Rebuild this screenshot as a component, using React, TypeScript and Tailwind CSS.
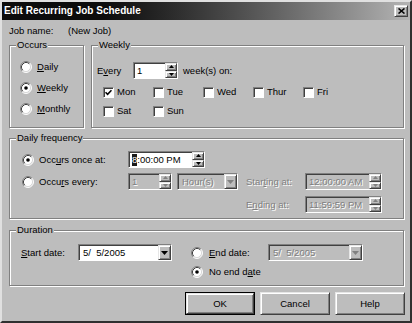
import type { ReactNode } from 'react'

const bg = 'bg-[#bdbdbd]'
const sunken =
  'border border-t-[#808080] border-l-[#808080] border-r-white border-b-white shadow-[inset_1px_1px_0_#404040]'
const raised =
  'border border-t-[#e6e6e6] border-l-[#e6e6e6] border-r-[#404040] border-b-[#404040] bg-[#bdbdbd] shadow-[inset_1px_1px_0_#fff,inset_-1px_-1px_0_#808080]'
const dim = 'text-[#808080] [text-shadow:1px_1px_0_#fff]'

function U({ children }: { children: ReactNode }) {
  return <span className="underline underline-offset-[1px]">{children}</span>
}

function Radio({ checked }: { checked?: boolean }) {
  return (
    <svg width="12" height="12" viewBox="0 0 12 12" className="shrink-0">
      <circle cx="6" cy="6" r="5" fill="white" />
      <path d="M9.89 2.11A5.5 5.5 0 0 0 2.11 9.89" stroke="#808080" fill="none" />
      <path d="M2.11 9.89A5.5 5.5 0 0 0 9.89 2.11" stroke="#fff" fill="none" />
      <path d="M9.18 2.82A4.5 4.5 0 0 0 2.82 9.18" stroke="#404040" fill="none" />
      <path d="M2.82 9.18A4.5 4.5 0 0 0 9.18 2.82" stroke="#d8d8d8" fill="none" />
      {checked && <circle cx="6" cy="6" r="1.8" fill="#000" />}
    </svg>
  )
}

function Check({ checked }: { checked?: boolean }) {
  return (
    <div className={`flex h-[11px] w-[11px] shrink-0 items-center justify-center bg-white ${sunken}`}>
      {checked && (
        <svg width="7" height="7" viewBox="0 0 7 7">
          <path d="M0.5 3.2 L2.6 5.3 L6.5 1.2" stroke="#000" strokeWidth="1.6" fill="none" />
        </svg>
      )}
    </div>
  )
}

function Arrow({ up, off }: { up?: boolean; off?: boolean }) {
  return (
    <svg width="5" height="3" viewBox="0 0 5 3">
      <path d={up ? 'M2.5 0L5 3H0Z' : 'M0 0H5L2.5 3Z'} fill={off ? '#808080' : '#000'} />
    </svg>
  )
}

function Spin({ w, children, off }: { w: string; children: ReactNode; off?: boolean }) {
  return (
    <div className={`flex h-[17px] ${w} ${sunken} ${off ? bg : 'bg-white'}`}>
      <div className={`flex flex-1 items-center pl-[3px] ${off ? dim : ''}`}>{children}</div>
      <div className="flex w-[12px] flex-col">
        <div className={`flex flex-1 items-center justify-center ${raised}`}>
          <Arrow up off={off} />
        </div>
        <div className={`flex flex-1 items-center justify-center ${raised}`}>
          <Arrow off={off} />
        </div>
      </div>
    </div>
  )
}

function Combo({ w, children, off }: { w: string; children: ReactNode; off?: boolean }) {
  return (
    <div className={`flex h-[17px] ${w} ${sunken} ${off ? bg : 'bg-white'}`}>
      <div className={`flex flex-1 items-center whitespace-pre pl-[4px] ${off ? dim : ''}`}>{children}</div>
      <div className={`flex w-[13px] items-center justify-center ${raised}`}>
        <svg width="7" height="4" viewBox="0 0 7 4">
          <path d="M0 0H7L3.5 4Z" fill={off ? '#808080' : '#000'} />
        </svg>
      </div>
    </div>
  )
}

function Group({ title, className, children }: { title: string; className: string; children: ReactNode }) {
  return (
    <fieldset
      className={`border border-[#808080] shadow-[1px_1px_0_#fff,inset_1px_1px_0_#fff] ${className}`}
    >
      <legend className={`ml-[6px] px-[1px] leading-[12px] ${bg}`}>{title}</legend>
      {children}
    </fieldset>
  )
}

function Day({ label, checked }: { label: string; checked?: boolean }) {
  return (
    <div className="flex w-[50px] items-center gap-[3px]">
      <Check checked={checked} />
      <span>{label}</span>
    </div>
  )
}

function Button({ label, isDefault }: { label: string; isDefault?: boolean }) {
  return (
    <div className={`h-[23px] w-[70px] ${isDefault ? 'border border-black' : ''}`}>
      <div className={`flex h-full w-full items-center justify-center ${raised}`}>{label}</div>
    </div>
  )
}

export default function App() {
  return (
    <div
      className={`h-[323px] w-[412px] border-2 border-t-[#e0e0e0] border-l-[#e0e0e0] border-r-[#303030] border-b-[#303030] font-['Liberation_Sans',Arial,sans-serif] text-[9.5px] leading-[12px] text-black ${bg}`}
    >
      <div className="flex h-[18px] items-center justify-between bg-gradient-to-r from-[#0c0c0c] from-25% to-[#b4b4b4] pl-[2px] pr-[2px]">
        <span className="text-[10px] font-bold text-white">Edit Recurring Job Schedule</span>
        <div className={`flex h-[12px] w-[14px] items-center justify-center ${raised}`}>
          <svg width="7" height="6" viewBox="0 0 7 6">
            <path d="M0.5 0.5L6.5 5.5M6.5 0.5L0.5 5.5" stroke="#000" strokeWidth="1.6" />
          </svg>
        </div>
      </div>

      <div className="pl-[7px] pt-[5px]">
        <div className="flex h-[12px] items-center">
          <span className="w-[59px]">Job name:</span>
          <span>(New Job)</span>
        </div>

        <div className="mt-[2px] flex gap-[7px]">
          <Group title="Occurs" className="h-[89px] w-[75px]">
            <div className="flex flex-col gap-[9px] pl-[10px] pt-[10px]">
              <div className="flex h-[12px] items-center gap-[5px]">
                <Radio />
                <span>
                  <U>D</U>aily
                </span>
              </div>
              <div className="flex h-[12px] items-center gap-[5px]">
                <Radio checked />
                <span>
                  <U>W</U>eekly
                </span>
              </div>
              <div className="flex h-[12px] items-center gap-[5px]">
                <Radio />
                <span>
                  <U>M</U>onthly
                </span>
              </div>
            </div>
          </Group>

          <Group title="Weekly" className="h-[89px] w-[313px]">
            <div className="pl-[5px] pt-[11px]">
              <div className="flex items-center">
                <span className="w-[36px]">
                  E<U>v</U>ery
                </span>
                <Spin w="w-[45px]">1</Spin>
                <span className="ml-[5px]">week(s) on:</span>
              </div>
              <div className="mt-[7px] flex h-[12px] pl-[6px]">
                <Day label="Mon" checked />
                <Day label="Tue" />
                <Day label="Wed" />
                <Day label="Thur" />
                <Day label="Fri" />
              </div>
              <div className="mt-[7px] flex h-[12px] pl-[6px]">
                <Day label="Sat" />
                <Day label="Sun" />
              </div>
            </div>
          </Group>
        </div>

        <Group title="Daily frequency" className="mt-[4px] h-[87px] w-[395px]">
          <div className="pt-[7px]">
            <div className="flex items-center pl-[12px]">
              <Radio checked />
              <span className="ml-[5px] w-[89px]">
                Occ<U>u</U>rs once at:
              </span>
              <Spin w="w-[77px]">
                <span className="bg-[#1a1a1a] text-white">8</span>:00:00 PM
              </Spin>
            </div>
            <div className="mt-[5px] flex items-center pl-[12px]">
              <Radio />
              <span className="ml-[5px] w-[89px]">
                Occu<U>r</U>s every:
              </span>
              <Spin w="w-[44px]" off>
                1
              </Spin>
              <div className="ml-[5px]">
                <Combo w="w-[61px]" off>
                  Hour(s)
                </Combo>
              </div>
              <span className={`ml-[8px] w-[59px] ${dim}`}>
                Star<U>t</U>ing at:
              </span>
              <Spin w="w-[77px]" off>
                12:00:00 AM
              </Spin>
            </div>
            <div className="mt-[6px] flex items-center pl-[236px]">
              <span className={`w-[59px] ${dim}`}>
                E<U>n</U>ding at:
              </span>
              <Spin w="w-[77px]" off>
                11:59:59 PM
              </Spin>
            </div>
          </div>
        </Group>

        <Group title="Duration" className="mt-[5px] h-[62px] w-[395px]">
          <div className="pt-[8px]">
            <div className="flex h-[17px] items-center pl-[11px]">
              <span className="w-[57px]">
                <U>S</U>tart date:
              </span>
              <Combo w="w-[94px]">{'5/  5/2005'}</Combo>
              <div className="ml-[19px]">
                <Radio />
              </div>
              <span className="ml-[6px] w-[59px]">
                <U>E</U>nd date:
              </span>
              <Combo w="w-[95px]" off>
                {'5/  5/2005'}
              </Combo>
            </div>
            <div className="mt-[5px] flex h-[12px] items-center gap-[6px] pl-[181px]">
              <Radio checked />
              <span>
                No end d<U>a</U>te
              </span>
            </div>
          </div>
        </Group>

        <div className="mt-[6px] flex w-[396px] justify-end gap-[5px]">
          <Button label="OK" isDefault />
          <Button label="Cancel" />
          <Button label="Help" />
        </div>
      </div>
    </div>
  )
}
